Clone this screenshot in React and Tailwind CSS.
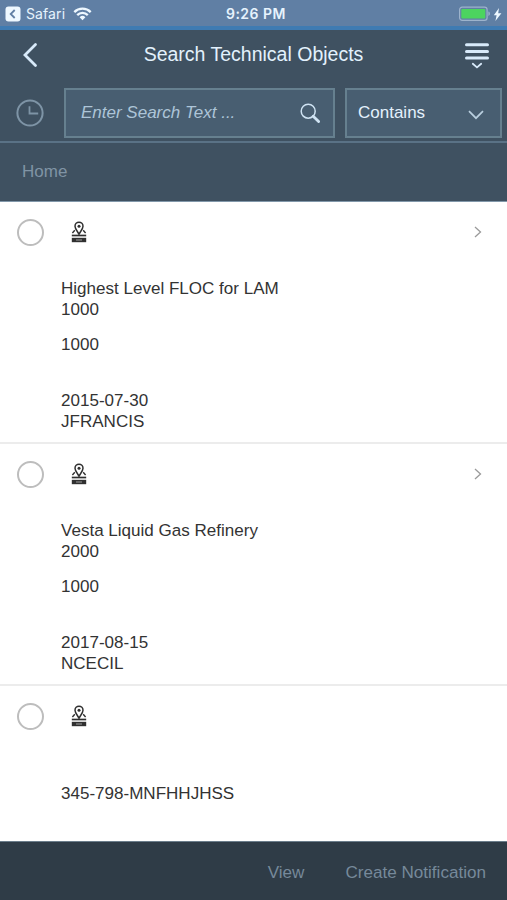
import { useState } from "react";

const objects = [
  {
    id: "1000",
    name: "Highest Level FLOC for LAM",
    plant: "1000",
    date: "2015-07-30",
    user: "JFRANCIS",
    hasChildren: true,
  },
  {
    id: "2000",
    name: "Vesta Liquid Gas Refinery",
    plant: "1000",
    date: "2017-08-15",
    user: "NCECIL",
    hasChildren: true,
  },
  { id: "345-798-MNFHHJHSS", name: "", hasChildren: false },
];

function FlocIcon() {
  return (
    <svg width="16" height="22" viewBox="0 0 16 22" fill="none" stroke="#303030">
      <path d="M8 13.2C7 11 4 8 4 5.2a4 4 0 0 1 8 0C12 8 9 11 8 13.2Z" strokeWidth="1.5" />
      <circle cx="8" cy="5.3" r="1.5" fill="#303030" stroke="none" />
      <path d="M3.8 9.2 1.4 12M12.2 9.2l2.4 2.8" strokeWidth="1.4" />
      <path d="M0.8 14.5h14.4" strokeWidth="1.7" />
      <path d="M0.8 19h14.4" strokeWidth="4.4" />
      <path d="M5 19h6" stroke="#8a8a8a" strokeWidth="1.2" />
    </svg>
  );
}

function StatusBar() {
  return (
    <div className="grid h-[30px] shrink-0 grid-cols-3 items-center border-b-4 border-[#3f7bb2] bg-[#607fa4] pt-0.5 font-['Inter',sans-serif] text-[#e6f3fd]">
      <div className="flex items-center pl-[5px]">
        <svg width="16" height="16" viewBox="0 0 16 16">
          <rect x="0.5" y="0.5" width="15" height="15" rx="3" fill="#eef8ff" />
          <path d="M9.7 4 5.7 8l4 4" fill="none" stroke="#607fa4" strokeWidth="1.8" />
        </svg>
        <span className="ml-[5px] text-[14px] leading-4 tracking-[0.1px]">Safari</span>
        <svg className="ml-[8px]" width="19" height="14" viewBox="0 0 19 14" fill="none" stroke="#eef8ff" strokeWidth="2.3">
          <path d="M1.3 5.1a11.6 11.6 0 0 1 16.4 0" />
          <path d="M4.2 8.1a7.5 7.5 0 0 1 10.6 0" />
          <path d="M9.5 13.2 6.6 10.3a4.1 4.1 0 0 1 5.8 0Z" fill="#eef8ff" stroke="none" />
        </svg>
      </div>
      <span className="pl-[5px] text-center text-[14px] leading-4 font-semibold tracking-[0.5px]">9:26 PM</span>
      <div className="flex items-center justify-end pr-[5px]">
        <svg width="32" height="16" viewBox="0 0 32 16">
          <rect x="0.6" y="1.2" width="27.5" height="13.2" rx="2.6" fill="none" stroke="#9db3cc" strokeWidth="1.2" />
          <rect x="2.3" y="3" width="24" height="9.6" rx="1" fill="#4cd45f" />
          <path d="M29.4 5.6c2 .6 2 3.8 0 4.4Z" fill="#9db3cc" />
        </svg>
        <svg className="ml-[2px]" width="9" height="13" viewBox="0 0 9 13" fill="#eef8ff">
          <path d="M6 0 0.8 7.3h2.8L2.4 13 8.4 5.2H5.2Z" />
        </svg>
      </div>
    </div>
  );
}

function ObjectRow({ item, selected, onToggle }) {
  return (
    <li className="h-[242px] border-b-2 border-[#ececec]">
      <div className="flex h-[60px] items-center pr-[25px] pl-[17px]">
        <button
          onClick={onToggle}
          aria-label="Select"
          className={`size-[27px] rounded-full border-2 border-[#bdbdbd] ${selected ? "bg-[#4a6074]" : "bg-white"}`}
        ></button>
        <span className="ml-[27px]">
          <FlocIcon />
        </span>
        {item.hasChildren && (
          <svg className="ml-auto" width="8" height="12" viewBox="0 0 8 12" fill="none" stroke="#9a9a9a" strokeWidth="1.3">
            <path d="m1 1 5.5 5L1 11" />
          </svg>
        )}
      </div>
      <div className="pt-4 pl-[61px] text-[17.05px] leading-[21px] text-[#333333]">
        <p className="h-[21px]">{item.name}</p>
        <p>{item.id}</p>
        <p className="mt-[14px] h-[21px]">{item.plant}</p>
        <p className="mt-[35px]">{item.date}</p>
        <p>{item.user}</p>
      </div>
    </li>
  );
}

export default function App() {
  const [search, setSearch] = useState("");
  const [selected, setSelected] = useState([]);

  const toggle = (id) => {
    setSelected(selected.includes(id) ? selected.filter((s) => s !== id) : [...selected, id]);
  };

  return (
    <div className="flex h-[900px] w-[507px] flex-col overflow-hidden bg-white font-['Liberation_Sans',Arial,sans-serif]">
      <StatusBar />

      {/* Header */}
      <header className="shrink-0 bg-[#3f5161]">
        <div className="flex h-[50px] items-center justify-between pr-[17px] pl-[22px]">
          <svg width="16" height="26" viewBox="0 0 16 26" fill="none" stroke="#d8eafa" strokeWidth="2.8" strokeLinecap="round">
            <path d="M13.5 2.5 3 13l10.5 10.5" />
          </svg>
          <h1 className="pb-0.5 pl-[5px] text-[19.5px] leading-6 text-[#e3f1fd]">Search Technical Objects</h1>
          <svg width="26" height="28" viewBox="0 0 26 28" fill="none" stroke="#d8eafa" strokeLinecap="round">
            <path d="M2.5 3.7h21M2.5 10.4h21M2.5 17h21" strokeWidth="3" />
            <path d="m8.8 22.8 4.2 3.6 4.2-3.6" strokeWidth="1.8" />
          </svg>
        </div>

        {/* Search */}
        <div className="flex h-[63px] items-start border-b-2 border-[#5a7286] pt-2 pr-[5px] pl-4">
          <svg className="mt-[11px]" width="28" height="28" viewBox="0 0 28 28" fill="none" stroke="#7e94a6">
            <circle cx="14" cy="14" r="12.6" strokeWidth="2" />
            <path d="M13.5 7.2v7.3h8.7" strokeWidth="1.8" />
          </svg>
          <div className="ml-5 flex h-[50px] w-[271px] items-center border-2 border-[#66808f] bg-[#485e71] pr-[13px] pl-[15px]">
            <input
              value={search}
              onChange={(e) => setSearch(e.target.value)}
              placeholder="Enter Search Text ..."
              className="min-w-0 flex-1 text-[17px] text-[#e3f1fd] outline-none placeholder:text-[#adc5d8] placeholder:italic"
            />
            <svg width="20" height="20" viewBox="0 0 20 20" fill="none" stroke="#cfe3f3">
              <circle cx="8.2" cy="8.2" r="7" strokeWidth="1.5" />
              <path d="m13.2 13.2 5.4 5.4" strokeWidth="2.8" strokeLinecap="round" />
            </svg>
          </div>
          <button className="ml-[10px] flex h-[50px] flex-1 items-center justify-between border-2 border-[#66808f] bg-[#485e71] pr-4 pl-[11px] text-[17px] text-[#e3f1fd]">
            Contains
            <svg className="mt-1" width="16" height="10" viewBox="0 0 16 10" fill="none" stroke="#b9cfdf" strokeWidth="1.7">
              <path d="m1 1.2 7 7 7-7" />
            </svg>
          </button>
        </div>

        <nav className="flex h-[59px] items-center border-b border-[#8298aa] pl-[22px] text-[17px] text-[#8094a5]">
          Home
        </nav>
      </header>

      <ul className="min-h-0 flex-1 overflow-hidden">
        {objects.map((item) => (
          <ObjectRow
            key={item.id}
            item={item}
            selected={selected.includes(item.id)}
            onToggle={() => toggle(item.id)}
          />
        ))}
      </ul>

      {/* Footer */}
      <footer className="flex h-[59px] shrink-0 items-center justify-end gap-[41px] border-t border-[#6b7d8b] bg-[#2f3c47] pr-[21px] pt-[3px] text-[17.1px] text-[#76899a]">
        <button>View</button>
        <button>Create Notification</button>
      </footer>
    </div>
  );
}
